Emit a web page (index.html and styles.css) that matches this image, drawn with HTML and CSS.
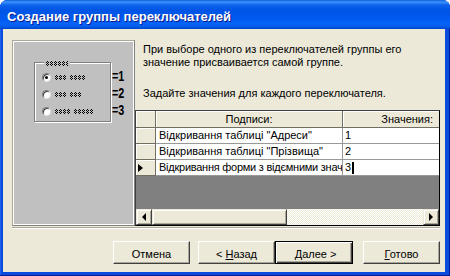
FILE: index.html
```html
<html>

<head>
    <meta http-equiv="Content-Type" content="text/html; charset=UTF-8">
    <link rel="stylesheet" href="styles.css">
</head>

<body>
    <div class="window">
        <div class="titlebar">
            <span class="title">Создание группы переключателей</span>
        </div>
        <div class="client">
            <div class="wizard">
                <div class="preview">
                    <div class="group">
                        <span class="caption"><span class="ph" style="width: 22px"></span></span>
                        <div class="opt"><span class="radio on"></span><span class="ph" style="width: 12px"></span><span class="ph" style="width: 16px"></span></div>
                        <div class="opt"><span class="radio"></span><span class="ph" style="width: 12px"></span><span class="ph" style="width: 12px"></span></div>
                        <div class="opt"><span class="radio"></span><span class="ph" style="width: 16px"></span><span class="ph" style="width: 20px"></span></div>
                    </div>
                    <div class="values">
                        <div>=1</div>
                        <div>=2</div>
                        <div>=3</div>
                    </div>
                </div>
                <div class="side">
                    <p class="first">При выборе одного из переключателей группы его<br>значение присваивается самой группе.</p>
                    <p class="second">Задайте значения для каждого переключателя.</p>
                    <div class="sheet">
                        <table>
                            <colgroup>
                                <col class="selCol">
                                <col class="labCol">
                                <col>
                            </colgroup>
                            <thead>
                                <tr>
                                    <th class="sel"></th>
                                    <th class="lab">Подписи:</th>
                                    <th class="val">Значения:</th>
                                </tr>
                            </thead>
                            <tbody>
                                <tr>
                                    <td class="sel"></td>
                                    <td>Відкривання таблиці "Адреси"</td>
                                    <td class="val">1</td>
                                </tr>
                                <tr>
                                    <td class="sel"></td>
                                    <td>Відкривання таблиці "Прізвища"</td>
                                    <td class="val">2</td>
                                </tr>
                                <tr>
                                    <td class="sel"><span class="current"></span></td>
                                    <td class="tight">Відкривання форми з відємними знач</td>
                                    <td class="val">3<span class="caret"></span></td>
                                </tr>
                            </tbody>
                        </table>
                        <div class="empty"></div>
                        <div class="hscroll">
                            <div class="sbBtn"><span class="arrowLeft"></span></div>
                            <div class="thumb"></div>
                            <div class="track"></div>
                            <div class="sbBtn"><span class="arrowRight"></span></div>
                        </div>
                    </div>
                </div>
            </div>
            <div class="sep"></div>
            <div class="buttons">
                <button class="btn">Отмена</button>
                <button class="btn back">&lt; <u>Н</u>азад</button>
                <button class="btn default">&nbsp;<u>Д</u>алее &gt;</button>
                <button class="btn finish"><u>Г</u>отово</button>
            </div>
        </div>
    </div>
</body>

</html>
```

FILE: styles.css
```css
body {
    margin: 0;
    background: #fff;
    font-family: "Liberation Sans", Arial, sans-serif;
    font-size: 11px;
    color: #000;
}

.window {
    width: 450px;
    height: 276px;
    display: flex;
    flex-direction: column;
    background: #0a4bdc;
    border-radius: 8px 8px 0 0;
    box-shadow: inset 0 -1px #001d9e, inset -1px 0 #001d9e, inset 1px 0 #1c63ee;
}

.titlebar {
    flex: none;
    height: 29px;
    box-sizing: border-box;
    padding: 9px 0 0 7px;
    line-height: 15px;
    border-radius: 7px 7px 0 0;
    background: linear-gradient(180deg, #0a5fd8 0px, #3d93ff 2px, #0d63ec 5px, #0055e5 10px, #0058ee 18px, #0764f8 24px, #0459e8 27px, #0042c4 29px);
}

.title {
    color: #fff;
    font-weight: bold;
    font-size: 13px;
    text-shadow: 1px 1px #0a1a8c;
}

.client {
    flex: 1;
    margin: 0 5px 4px 3px;
    padding: 11px 5px 0 9px;
    background: #ece9d8;
}

.wizard {
    display: flex;
    height: 186px;
}

.preview {
    width: 123px;
    box-sizing: border-box;
    background: #c0c0c0;
    border: 1px solid;
    border-color: #aca899 #808080 #808080 #aca899;
    box-shadow: inset 1px 1px #fff, inset -1px -1px #fff;
    padding: 21px 0 0 21px;
    display: flex;
    align-items: flex-start;
}

.group {
    position: relative;
    width: 77px;
    height: 60px;
    box-sizing: border-box;
    border: 1px solid #808080;
    box-shadow: inset 1px 1px #fff, 1px 1px #fff;
    padding: 6px 0 0 7px;
}

.caption {
    position: absolute;
    top: -2px;
    left: 9px;
    padding: 0 2px;
    background: #c0c0c0;
    display: flex;
}

.ph {
    display: inline-block;
    height: 5px;
    margin-right: 3px;
    background-image: repeating-linear-gradient(90deg, transparent 0 3px, #c0c0c0 3px 4px), repeating-conic-gradient(#000 0 25%, #c0c0c0 0 50%);
    background-size: auto, 2px 2px;
}

.caption .ph {
    margin-right: 0;
}

.opt {
    display: flex;
    align-items: center;
    height: 17px;
}

.radio {
    position: relative;
    width: 9px;
    height: 9px;
    box-sizing: border-box;
    margin-right: 4px;
    border-radius: 50%;
    background: #fff;
    border: 1px solid;
    border-color: #808080 #e0e0e0 #e0e0e0 #808080;
    box-shadow: inset 1px 1px #404040;
}

.radio.on::after {
    content: "";
    position: absolute;
    left: 2px;
    top: 2px;
    width: 3px;
    height: 3px;
    border-radius: 50%;
    background: #000;
}

.values {
    margin-left: 1px;
    padding-top: 5px;
    font-weight: bold;
    font-size: 15px;
    line-height: 17px;
}

.values div {
    transform: scaleX(0.72);
    transform-origin: left;
}

.side {
    flex: 1;
    display: flex;
    flex-direction: column;
}

.side p {
    margin: 0;
    padding-left: 8px;
    line-height: 13px;
}

.side .first {
    margin-top: 3px;
}

.side .second {
    margin-top: 18px;
}

.sheet {
    margin-top: auto;
    height: 116px;
    box-sizing: border-box;
    border: 1px solid;
    border-color: #404040 #000 #000 #404040;
    display: flex;
    flex-direction: column;
    background: #808080;
}

table {
    width: 100%;
    table-layout: fixed;
    border-collapse: separate;
    border-spacing: 0;
    font-family: inherit;
    font-size: inherit;
}

.selCol {
    width: 20px;
}

.labCol {
    width: 187px;
}

th {
    background: #ece9d8;
    font-weight: normal;
    line-height: 16px;
    padding: 0;
    border-right: 1px solid #716f64;
    border-bottom: 1px solid #716f64;
    box-shadow: inset 1px 1px #fff;
}

th.lab {
    text-align: center;
}

th.val {
    text-align: right;
    padding-right: 6px;
    border-right: none;
}

td {
    background: #fff;
    line-height: 15px;
    padding: 0 0 0 3px;
    white-space: nowrap;
    overflow: hidden;
    border-right: 1px solid #999;
    border-bottom: 1px solid #999;
}

td.tight {
    letter-spacing: -0.25px;
}

td.val {
    padding-left: 2px;
    border-right: none;
}

td.sel {
    background: #ece9d8;
    padding: 0;
    border-color: #716f64;
    box-shadow: inset 1px 1px #fff;
}

.current {
    display: inline-block;
    vertical-align: middle;
    margin-left: 2px;
    border-left: 5px solid #000;
    border-top: 4px solid transparent;
    border-bottom: 4px solid transparent;
}

.caret {
    display: inline-block;
    vertical-align: middle;
    width: 2px;
    height: 12px;
    margin-left: 1px;
    background: #000;
}

.empty {
    flex: 1;
}

.hscroll {
    height: 16px;
    display: flex;
    background-image: repeating-conic-gradient(#fff 0 25%, #ece9d8 0 50%);
    background-size: 2px 2px;
}

.sbBtn,
.thumb {
    width: 16px;
    height: 16px;
    box-sizing: border-box;
    background: #ece9d8;
    border: 1px solid;
    border-color: #ece9d8 #404040 #404040 #ece9d8;
    box-shadow: inset 1px 1px #fff, inset -1px -1px #aca899;
    display: flex;
    align-items: center;
    justify-content: center;
}

.thumb {
    width: 135px;
}

.track {
    flex: 1;
}

.arrowLeft {
    border-right: 4px solid #000;
    border-top: 4px solid transparent;
    border-bottom: 4px solid transparent;
}

.arrowRight {
    border-left: 4px solid #000;
    border-top: 4px solid transparent;
    border-bottom: 4px solid transparent;
}

.sep {
    margin-top: 1px;
    border-top: 1px solid #aca899;
    border-bottom: 1px solid #fff;
}

.buttons {
    display: flex;
    justify-content: flex-end;
    margin-top: 12px;
}

.btn {
    width: 77px;
    height: 23px;
    box-sizing: border-box;
    padding: 2px 0 0 0;
    font-family: inherit;
    font-size: inherit;
    color: #000;
    background: #ece9d8;
    border: 1px solid;
    border-color: #fff #404040 #404040 #fff;
    box-shadow: inset -1px -1px #aca899;
    border-radius: 0;
}

.btn.back {
    margin-left: 8px;
}

.btn.default {
    width: 78px;
    border-color: #000;
    box-shadow: inset 1px 1px #fff, inset -1px -1px #404040, inset -2px -2px #aca899;
}

.btn.finish {
    margin-left: 10px;
}
```
